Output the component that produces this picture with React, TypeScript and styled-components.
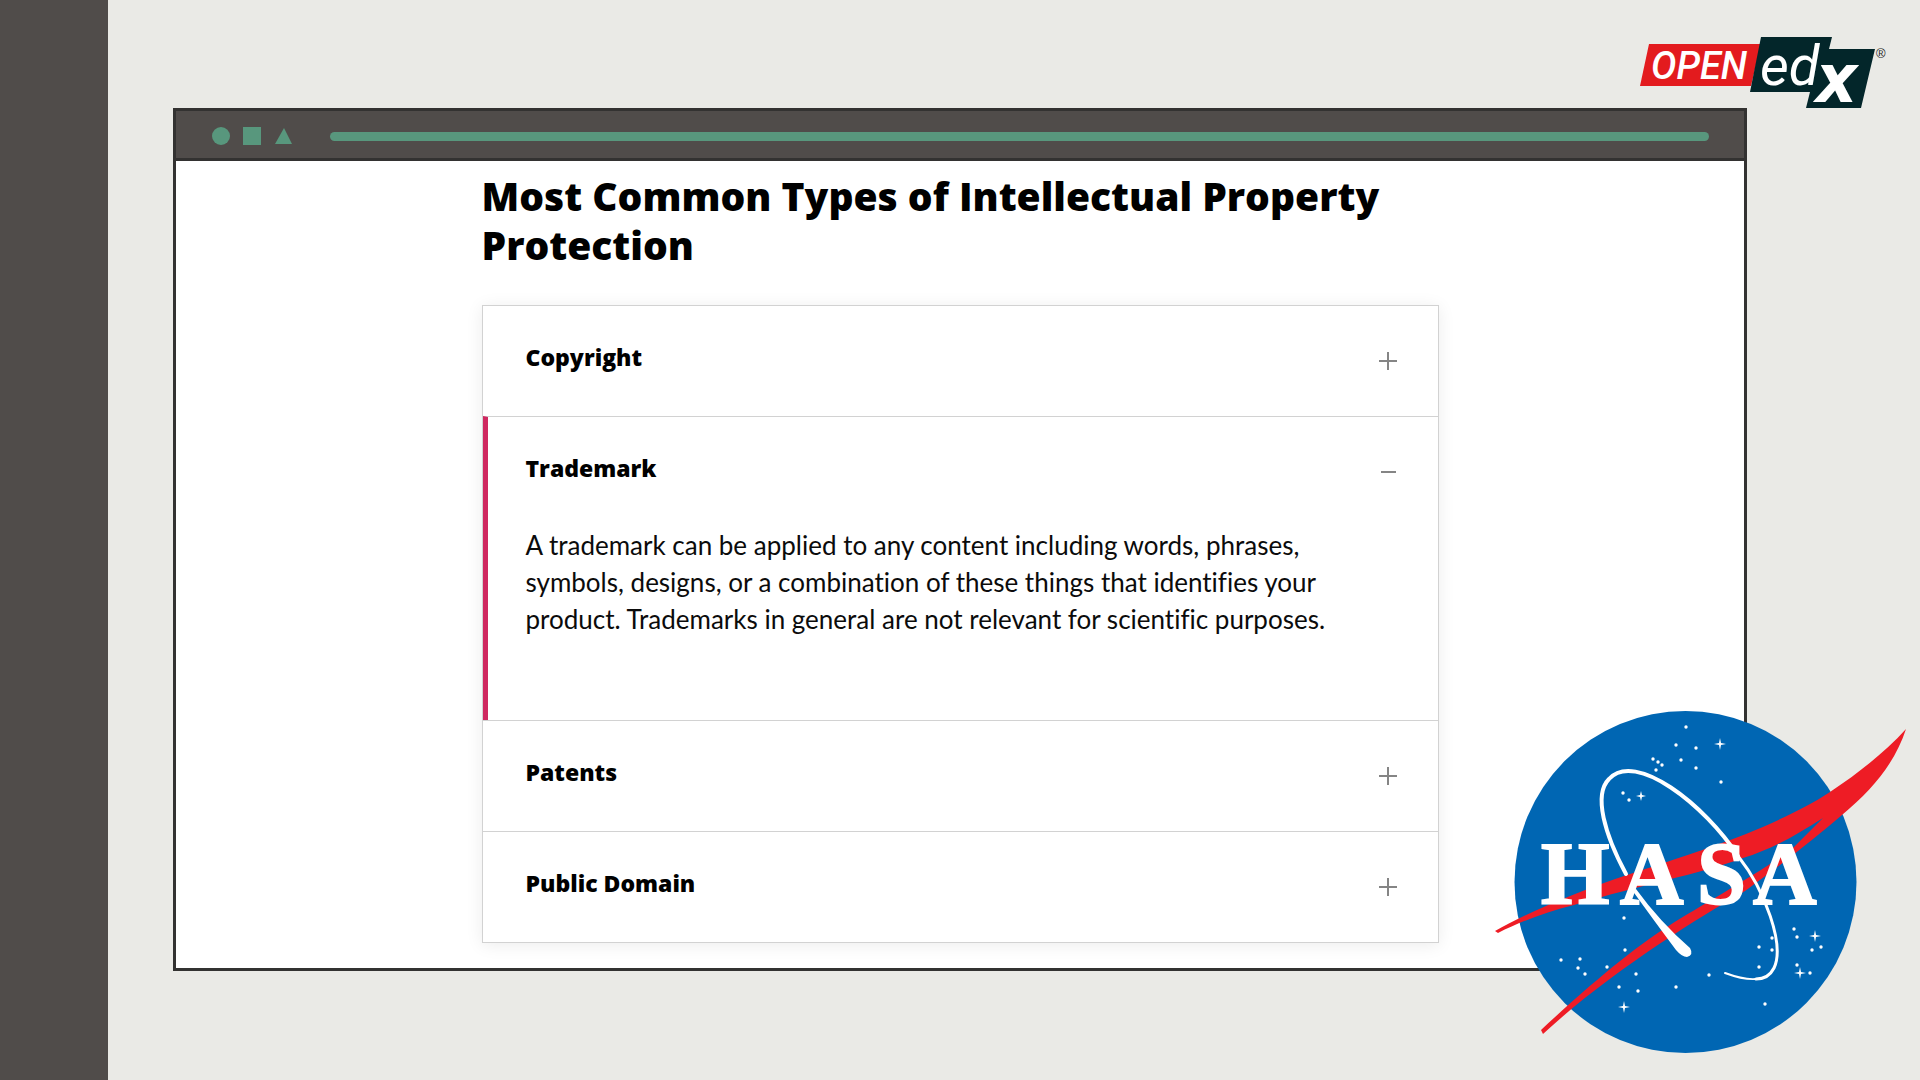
import React, { useState } from "react";
import styled, { createGlobalStyle } from "styled-components";

const GlobalStyle = createGlobalStyle`
  * { box-sizing: border-box; }
  body {
    margin: 0;
    background: #eaeae6;
    font-family: Lato, "Open Sans", sans-serif;
    font-variant-ligatures: none;
    color: #0b0b0b;
  }
  h1, h2, p { margin: 0; }
`;

const displayFont = `"Open Sans", "Noto Sans", sans-serif`;

const Page = styled.div`
  position: relative;
  display: flex;
  min-height: 100vh;
`;

const Rail = styled.aside`
  flex: 0 0 108px;
  background: #504c4a;
`;

const Stage = styled.main`
  flex: 1;
  min-width: 0;
  padding: 108px 173px 108px 65px;
`;

const BrowserWindow = styled.section`
  border: 3px solid #333231;
  background: #fff;
`;

const TitleBar = styled.header`
  display: flex;
  align-items: center;
  height: 50px;
  padding: 3px 35px 0 36px;
  background: #504c4a;
  border-bottom: 3px solid #333231;
`;

const Shapes = styled.svg`
  flex: none;
  width: 80px;
  height: 18px;
  fill: #58977d;
`;

const AddressLine = styled.div`
  flex: 1;
  height: 9px;
  margin-left: 38px;
  border-radius: 5px;
  background: #58977d;
`;

const Content = styled.div`
  width: 100%;
  max-width: 957px;
  margin: 0 auto;
  padding: 10px 0 25px;
`;

const Title = styled.h1`
  font-family: ${displayFont};
  font-size: 39px;
  line-height: 49px;
  font-weight: 800;
  color: #000;
`;

const Accordion = styled.div`
  margin-top: 36px;
  border: 1px solid #d2d2d2;
  box-shadow: 0 2px 16px rgba(0, 0, 0, 0.08);
`;

const Item = styled.section<{ $open: boolean }>`
  border-left: ${(p) => (p.$open ? "5px solid #cf2860" : "0 solid transparent")};
  padding-left: ${(p) => (p.$open ? "38px" : "43px")};
  & + & { border-top: 1px solid #d2d2d2; }
`;

const ItemHeading = styled.h2`
  font-family: ${displayFont};
  font-size: 23px;
  line-height: 30px;
`;

const Trigger = styled.button`
  display: flex;
  align-items: center;
  justify-content: space-between;
  width: 100%;
  height: 110px;
  padding: 0 40px 8px 0;
  border: 0;
  background: none;
  color: #000;
  font: inherit;
  font-weight: 800;
  text-align: left;
  cursor: pointer;
`;

const Sign = styled.svg`
  width: 20px;
  height: 20px;
  margin-top: 8px;
  stroke: #858585;
  stroke-width: 2;
`;

const Body = styled.p`
  max-width: 860px;
  padding: 0 40px 82px 0;
  font-size: 26px;
  line-height: 37px;
`;

const OpenEdx = styled.svg`
  position: absolute;
  top: 32px;
  right: 30px;
  width: 255px;
  height: 80px;
  overflow: visible;
`;

const Badge = styled.svg`
  position: absolute;
  right: 10px;
  bottom: 20px;
  width: 420px;
  height: 350px;
`;

const items = [
  { title: "Copyright" },
  {
    title: "Trademark",
    text: "A trademark can be applied to any content including words, phrases, symbols, designs, or a combination of these things that identifies your product. Trademarks in general are not relevant for scientific purposes.",
  },
  { title: "Patents" },
  { title: "Public Domain" },
];

const dots = [
  [1686, 727], [1676, 745], [1696, 748], [1681, 760], [1653, 759], [1658, 762], [1662, 765], [1656, 770],
  [1696, 768], [1721, 782], [1623, 793], [1629, 800], [1624, 918], [1625, 950], [1561, 960], [1580, 959],
  [1578, 968], [1585, 974], [1607, 967], [1636, 974], [1619, 987], [1638, 991], [1676, 987], [1709, 975],
  [1759, 947], [1772, 938], [1772, 950], [1759, 967], [1794, 929], [1797, 937], [1821, 947], [1812, 950],
  [1797, 965], [1810, 973], [1765, 1004],
];
const stars = [[1720, 744, 6], [1641, 796, 5], [1815, 936, 6], [1800, 973, 6], [1624, 1007, 6]];

export default function App() {
  const [open, setOpen] = useState(1);
  return (
    <Page>
      <GlobalStyle />
      <Rail />
      <Stage>
        <BrowserWindow>
          <TitleBar>
            <Shapes viewBox="0 0 80 18" aria-hidden="true">
              <circle cx="9" cy="9" r="9" />
              <path d="M31 0h18v18H31zM72 1l8 16H63z" />
            </Shapes>
            <AddressLine />
          </TitleBar>
          <Content>
            <Title>Most Common Types of Intellectual Property Protection</Title>
            <Accordion>
              {items.map((item, i) => {
                const isOpen = open === i;
                return (
                  <Item key={item.title} $open={isOpen}>
                    <ItemHeading>
                      <Trigger aria-expanded={isOpen} onClick={() => setOpen(isOpen ? -1 : i)}>
                        {item.title}
                        <Sign viewBox="0 0 20 20" aria-hidden="true">
                          <path d={isOpen ? "M3 10h15" : "M1 10h18M10 1v18"} />
                        </Sign>
                      </Trigger>
                    </ItemHeading>
                    {isOpen && item.text && <Body>{item.text}</Body>}
                  </Item>
                );
              })}
            </Accordion>
          </Content>
        </BrowserWindow>
      </Stage>

      <OpenEdx viewBox="1635 32 255 80" role="img" aria-label="Open edX">
        <path fill="#e31b1e" d="M1649 44h112l-10 42h-111z" />
        <path fill="#03262a" d="M1761 37h71l-3 12h46l-14 59h-55l4-16h-60z" />
        <g fill="#fff" fontStyle="italic" fontFamily="Lato, sans-serif">
          <text x="1651" y="79" fontSize="38" fontWeight="500" fontFamily="Roboto, sans-serif">OPEN</text>
          <text x="1760" y="85" fontSize="56" fontFamily="Roboto, sans-serif">ed</text>
          <text x="1818" y="101" fontSize="66" fontWeight="700" fontFamily="'Liberation Sans', Arial, sans-serif" stroke="#fff" strokeWidth="2">x</text>
        </g>
        <text x="1876" y="58" fontSize="13" fill="#222" fontFamily="'Liberation Sans', sans-serif">®</text>
      </OpenEdx>

      <Badge viewBox="1490 710 420 350" role="img" aria-label="HASA">
        <circle cx="1685.500" cy="882" r="171" fill="#0066b3" />
        <g fill="#fff">
          {dots.map(([x, y]) => (
            <circle key={x + "-" + y} cx={x} cy={y} r="1.700" />
          ))}
          {stars.map(([x, y, r]) => (
            <path key={x} d={`M${x} ${y - r}l1 ${r - 1} ${r - 1} 1-${r - 1} 1-1 ${r - 1}-1-${r - 1}-${r - 1}-1 ${r - 1}-1z`} />
          ))}
        </g>
        <path
          fill="#ee1c25"
          d="M1495 931C1530 911 1580 891 1627 875C1670 861 1710 848 1746 834C1775 822 1808 807 1830 792C1860 772 1885 752 1906 729C1895 763 1872 790 1842 815C1815 838 1780 866 1745 891C1695 920 1610 972 1543 1034L1541 1030C1600 975 1640 944 1670 925C1700 906 1765 870 1794 847L1823 818C1795 836 1770 850 1743 858C1700 874 1640 885 1574 905C1545 912 1520 922 1498 933z"
        />
        <text x="1541 1620 1697 1753" y="903" fontSize="88" fontWeight="700" fill="#fff" stroke="#fff" strokeWidth="2" fontFamily="'Liberation Serif', 'Times New Roman', serif">HASA</text>
        <g fill="none" stroke="#fff" strokeLinecap="round">
          <path strokeWidth="4" d="M1626 874C1605 835 1593 795 1609 779C1635 750 1705 805 1738 856" />
          <path strokeWidth="3" d="M1738 856C1765 890 1785 945 1774 968C1770 976 1764 979 1756 979" />
          <path strokeWidth="2" d="M1756 979Q1744 980 1725 973" />
        </g>
        <path fill="#fff" d="M1632 890L1636 889Q1660 922 1690 948Q1694 955 1687 957Q1682 957 1676 950Q1655 922 1632 890z" />
      </Badge>
    </Page>
  );
}
